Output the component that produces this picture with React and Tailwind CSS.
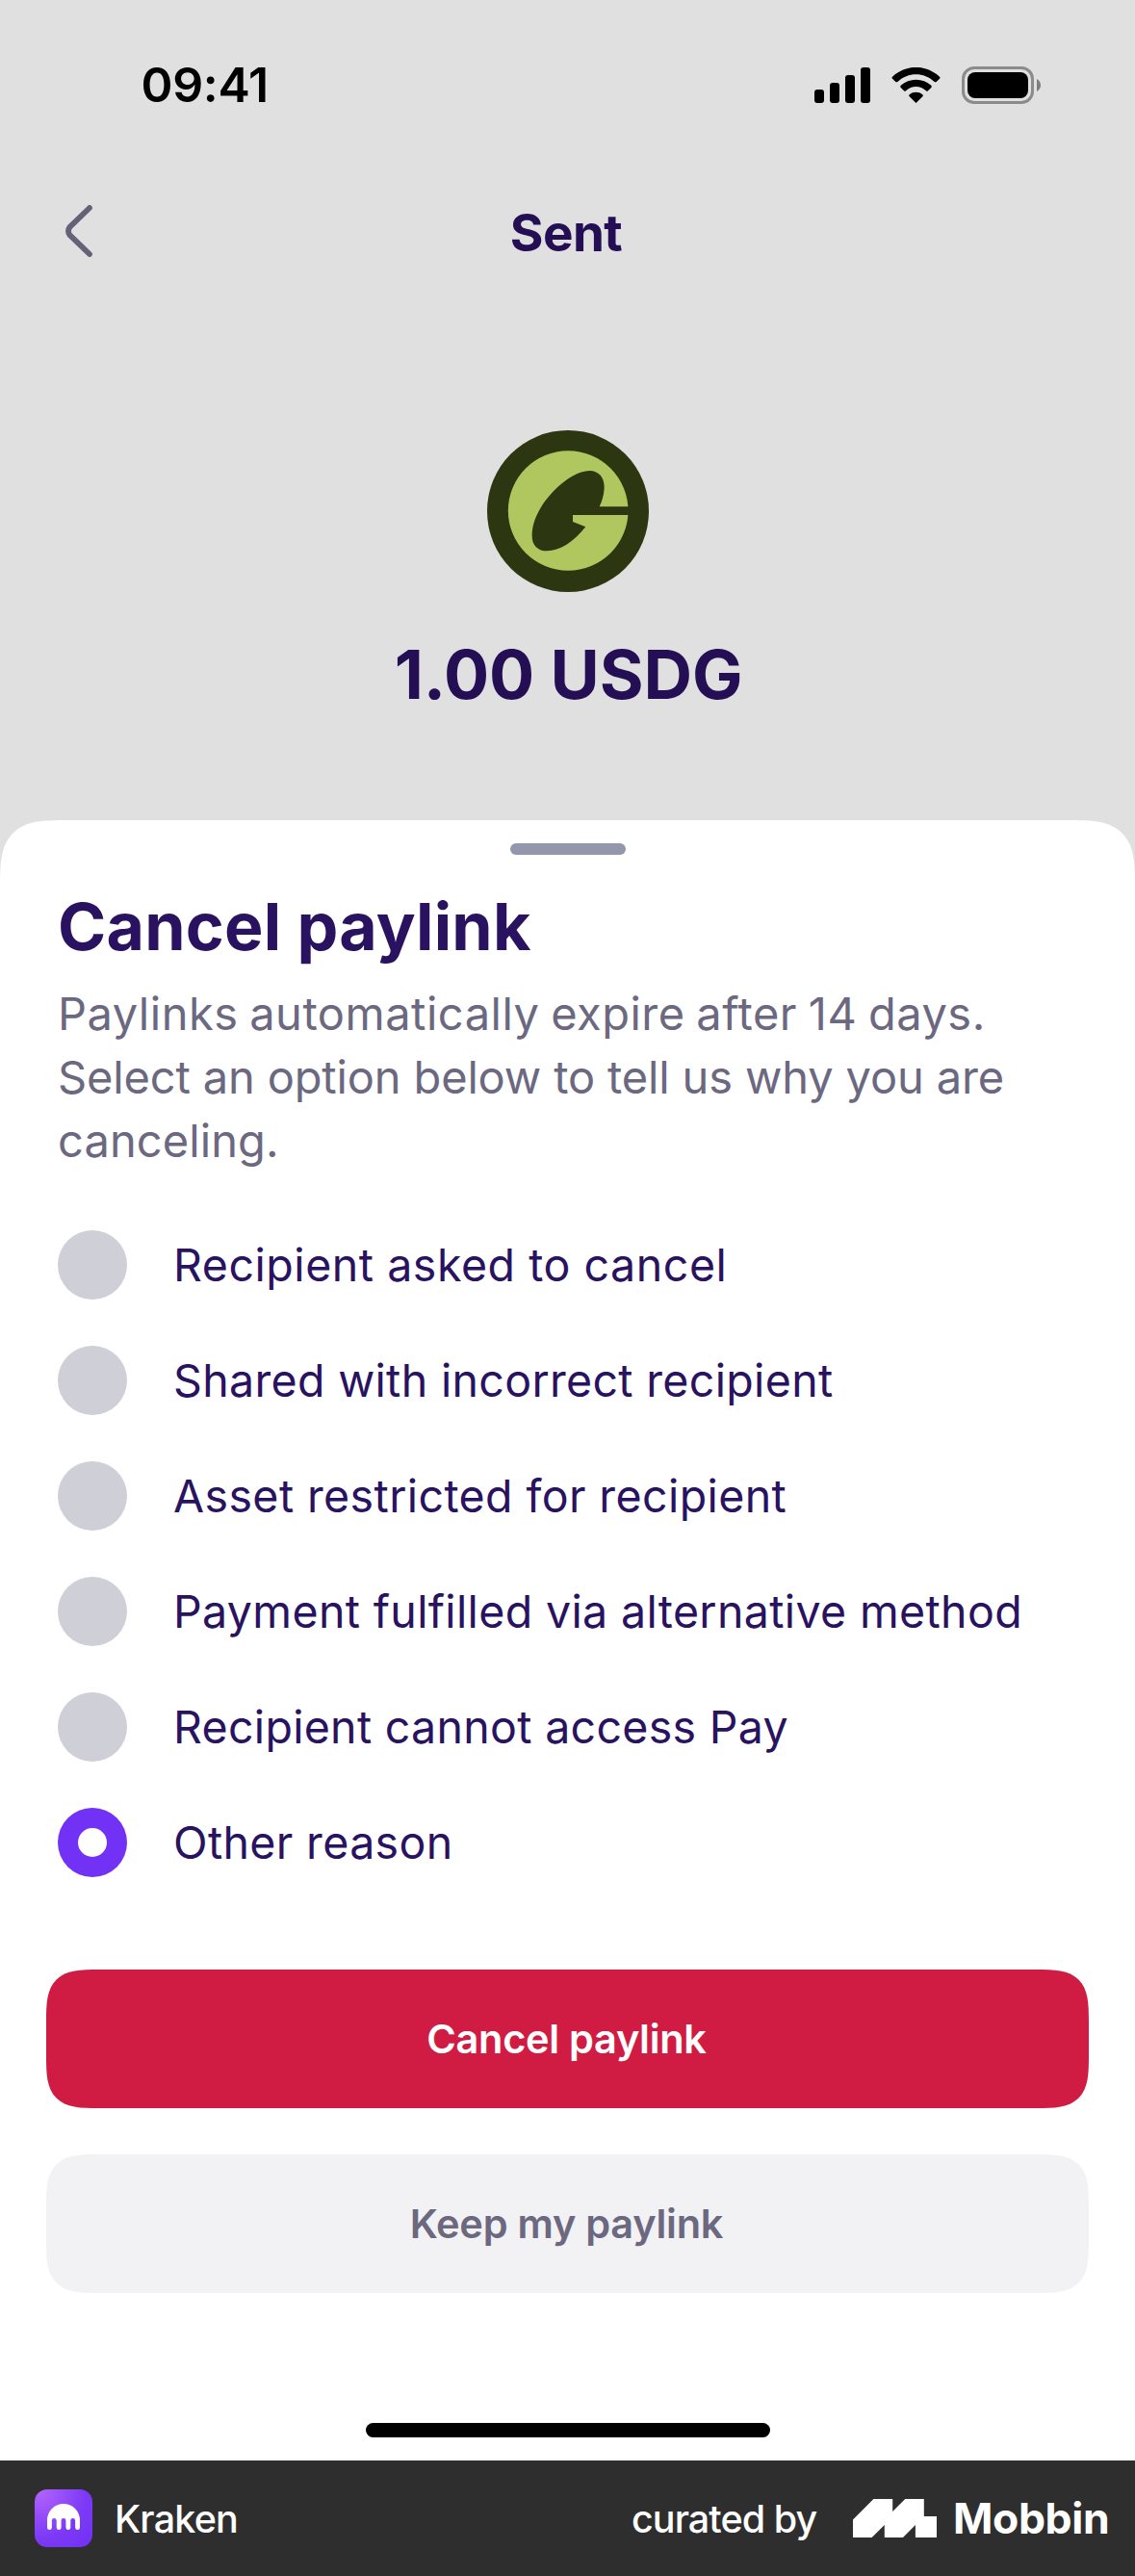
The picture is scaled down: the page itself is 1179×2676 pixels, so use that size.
import React, { useState } from "react";

const reasons = [
  { label: "Recipient asked to cancel", tracking: "tracking-[0.54px]" },
  { label: "Shared with incorrect recipient", tracking: "tracking-[0.33px]" },
  { label: "Asset restricted for recipient", tracking: "tracking-[0.4px]" },
  { label: "Payment fulfilled via alternative method", tracking: "tracking-[0.36px]" },
  { label: "Recipient cannot access Pay", tracking: "tracking-[0.3px]" },
  { label: "Other reason", tracking: "tracking-[0.36px]" },
];

function SignalIcon() {
  return (
    <svg width="58" height="37" viewBox="0 0 58 37" aria-hidden="true">
      <rect x="0" y="23" width="10" height="14" rx="3" />
      <rect x="16" y="16" width="10" height="21" rx="3" />
      <rect x="32" y="8" width="10" height="29" rx="3" />
      <rect x="48" y="0" width="10" height="37" rx="3" />
    </svg>
  );
}

function WifiIcon() {
  return (
    <svg width="51" height="37" viewBox="0 0 151 111" aria-hidden="true">
      <path d="M2 29C45-10 106-10 149 29Q152 32 149 35L139 45Q136 47 133 45C100 14 51 14 18 45Q15 47 12 45L2 35Q-1 32 2 29Z" />
      <path d="M28 56C54 32 97 32 123 56Q126 60 123 63L113 73Q110 76 107 73C89 56 62 56 44 73Q41 76 38 73L28 63Q25 60 28 56Z" />
      <path d="M55 85C66 75 85 75 96 85Q99 88 96 91L78 109Q75.5 112 73 109L55 91Q52 88 55 85Z" />
    </svg>
  );
}

function BatteryIcon() {
  return (
    <svg width="82" height="39" viewBox="0 0 82 39" aria-hidden="true">
      <rect x="1.5" y="1.5" width="72" height="36" rx="11.5" fill="none" stroke="#8b8b8b" strokeWidth="3" />
      <rect x="6" y="6" width="63" height="27" rx="8" />
      <path d="M78 13C80.5 14.2 82 16.7 82 19.5S80.5 24.8 78 26Z" fill="#7d7d7d" />
    </svg>
  );
}

function CoinIcon() {
  return (
    <svg className="ml-px size-[168px]" viewBox="0 0 504 504" aria-hidden="true">
      <circle cx="252" cy="252" r="252" fill="#2c3711" />
      <circle cx="252.5" cy="250.5" r="187" fill="#b0c760" />
      <path
        fill="#2c3711"
        d="M350 238C359 219 365 198 365 176C365 146 347 126 319 126C255 126 140 232 140 329C140 359 158 376 187 376C226 376 270 348 307 301L267 285V264H450V238Z"
      />
    </svg>
  );
}

function KrakenIcon() {
  return (
    <div className="flex size-[60px] rounded-[13px] bg-[radial-gradient(circle_at_10%_5%,#b062fb_0%,#7c3af6_60%,#7130f4_100%)]">
      <svg viewBox="0 0 180 180" className="size-full" aria-hidden="true">
        <path
          fill="#fff"
          d="M39 96a51 51 0 0 1 102 0v23a7.29 7.29 0 0 1-14.57 0V97a7.29 7.29 0 0 0-14.57 0v22a7.29 7.29 0 0 1-14.57 0V97a7.29 7.29 0 0 0-14.58 0v22a7.29 7.29 0 0 1-14.57 0V97a7.29 7.29 0 0 0-14.57 0v22A7.29 7.29 0 0 1 39 119Z"
        />
      </svg>
    </div>
  );
}

function MobbinIcon() {
  return (
    <svg width="87" height="40" viewBox="0 0 87 40" fill="#fff" aria-hidden="true">
      <path d="M21.4 0H41.2V13L54.2 0H73.8V18H87V40H64.9V27L52 40H32.8V27L19.6 40H0V21.4Z" />
    </svg>
  );
}

function Reason({ label, tracking, checked, onSelect }) {
  return (
    <button role="radio" aria-checked={checked} onClick={onSelect} className="flex h-[120px] items-center gap-12 text-left">
      <span
        className={
          checked
            ? "flex size-[72px] items-center justify-center rounded-full bg-[#7132f5]"
            : "flex size-[72px] items-center justify-center rounded-full bg-[#cecfd7]"
        }
      >
        {checked && <span className="size-[30px] rounded-full bg-white" />}
      </span>
      <span className={`whitespace-nowrap text-[46.5px] leading-[66px] text-[#291260] ${tracking}`}>{label}</span>
    </button>
  );
}

export default function App() {
  const [selected, setSelected] = useState(5);

  return (
    <div className="flex h-[2676px] w-[1179px] flex-col bg-[#e0e0e0] font-['Inter',sans-serif]">
      <div className="flex h-[852px] flex-col">
        <div className="flex h-[176px] items-center justify-between pr-[98px] pl-[146.5px]">
          <span className="text-[50px] leading-[60px] font-semibold tracking-[-0.3px] text-black">09:41</span>
          <div className="flex items-center gap-[22px]">
            <SignalIcon />
            <WifiIcon />
            <BatteryIcon />
          </div>
        </div>

        <div className="grid h-[130px] grid-cols-[1fr_auto_1fr] items-center pr-[70px] pl-[67px]">
          <svg className="-mt-0.5" width="29" height="54" viewBox="0 0 29 54" fill="none" stroke="#656278" strokeWidth="5.8" strokeLinecap="round" aria-label="Back">
            <path d="M26 3L5.4 23Q2.6 27 5.4 31L26 51" />
          </svg>
          <h2 className="pt-px text-[53px] leading-[62px] font-bold tracking-[-0.6px] text-[#240f55]">Sent</h2>
        </div>

        <div className="flex flex-col items-center pt-[141px]">
          <CoinIcon />
          <p className="mt-[45.5px] ml-0.5 text-[70px] leading-[80px] font-bold tracking-[-0.1px] text-[#240f55]">1.00 USDG</p>
        </div>
      </div>

      <div className="flex h-[1704px] flex-col rounded-t-[50px] bg-white supports-[corner-shape:squircle]:rounded-t-[70px] supports-[corner-shape:squircle]:[corner-shape:superellipse(1.7)]">
        <div className="mt-6 h-3 w-[120px] self-center rounded-full bg-[#9497ab]" />

        <div className="mt-[34px] px-[60px]">
          <h1 className="text-[68px] leading-[80px] font-bold tracking-[0.2px] text-[#291260]">Cancel paylink</h1>
          <p className="mt-[18px] text-[47px] leading-[66px] text-[#6b6880]">
            <span className="block whitespace-nowrap tracking-[0.5px] [word-spacing:-2px]">Paylinks automatically expire after 14 days.</span>
            <span className="block whitespace-nowrap tracking-[-0.15px]">Select an option below to tell us why you are</span>
            <span className="block tracking-[0.1px]">canceling.</span>
          </p>
        </div>

        <div role="radiogroup" className="mt-9 flex flex-col px-[60px]">
          {reasons.map((reason, index) => (
            <Reason
              key={reason.label}
              label={reason.label}
              tracking={reason.tracking}
              checked={selected === index}
              onSelect={() => setSelected(index)}
            />
          ))}
        </div>

        <div className="mt-[72px] flex flex-col gap-12 px-12">
          <button className="h-36 rounded-[39px] bg-[#d01b43] pr-0.5 text-[41.5px] font-semibold tracking-[-0.3px] text-white supports-[corner-shape:squircle]:rounded-[55px] supports-[corner-shape:squircle]:[corner-shape:superellipse(1.7)]">
            Cancel paylink
          </button>
          <button className="h-36 rounded-[39px] bg-[#f2f2f5] pr-0.5 text-[41.5px] font-semibold tracking-[-0.26px] text-[#6b6880] supports-[corner-shape:squircle]:rounded-[55px] supports-[corner-shape:squircle]:[corner-shape:superellipse(1.7)]">
            Keep my paylink
          </button>
        </div>

        <div className="mt-[135px] h-[15px] w-[420px] self-center rounded-full bg-black" />
      </div>

      <footer className="flex h-[120px] items-center justify-between bg-[#2e2e2e] pl-9 text-white">
        <div className="flex items-center gap-[23px]">
          <KrakenIcon />
          <span className="pt-[3px] text-[39.5px] leading-none font-medium tracking-[-0.8px]">Kraken</span>
        </div>
        <div className="flex w-[523px] items-center">
          <span className="w-[230px] pt-[3px] text-[39.5px] leading-none font-medium tracking-[-0.94px]">curated by</span>
          <MobbinIcon />
          <span className="ml-[17px] text-[44.5px] leading-none font-bold tracking-[-0.4px]">Mobbin</span>
        </div>
      </footer>
    </div>
  );
}
